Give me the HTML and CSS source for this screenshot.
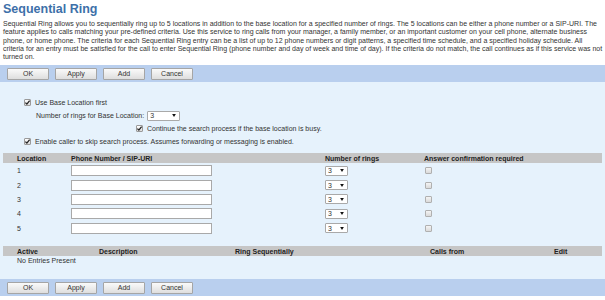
FILE: index.html
```html
<!DOCTYPE html>
<html>
<head>
<meta charset="utf-8">
<link rel="stylesheet" href="styles.css">
</head>
<body>
<h1 class="title">Sequential Ring</h1>
<p class="desc">Sequential Ring allows you to sequentially ring up to 5 locations in addition to the base location for a specified number of rings. The 5 locations can be either a phone number or a SIP-URI. The<br>feature applies to calls matching your pre-defined criteria. Use this service to ring calls from your manager, a family member, or an important customer on your cell phone, alternate business<br>phone, or home phone. The criteria for each Sequential Ring entry can be a list of up to 12 phone numbers or digit patterns, a specified time schedule, and a specified holiday schedule. All<br>criteria for an entry must be satisfied for the call to enter Sequential Ring (phone number and day of week and time of day). If the criteria do not match, the call continues as if this service was not<br>turned on.</p>

<div class="bar">
  <button class="btn">OK</button><button class="btn">Apply</button><button class="btn">Add</button><button class="btn">Cancel</button>
</div>

<div class="panel">
  <div class="opt ind1"><span class="cb"><svg viewBox="0 0 7 7"><path d="M1.4 3.6 L2.9 5.1 L5.6 1.6"/></svg></span><span>Use Base Location first</span></div>
  <div class="opt ind2"><span>Number of rings for Base Location:</span><span class="sel wide">3<svg class="arr" viewBox="0 0 5 4"><path d="M0 0 H5 L2.5 4 Z"/></svg></span></div>
  <div class="opt ind3"><span class="cb"><svg viewBox="0 0 7 7"><path d="M1.4 3.6 L2.9 5.1 L5.6 1.6"/></svg></span><span>Continue the search process if the base location is busy.</span></div>
  <div class="opt ind1"><span class="cb"><svg viewBox="0 0 7 7"><path d="M1.4 3.6 L2.9 5.1 L5.6 1.6"/></svg></span><span>Enable caller to skip search process. Assumes forwarding or messaging is enabled.</span></div>

  <div class="loc-table">
    <div class="thead loc-grid"><span>Location</span><span>Phone Number / SIP-URI</span><span>Number of rings</span><span>Answer confirmation required</span></div>
    <div class="row loc-grid"><span>1</span><input class="txt" type="text"><span class="sel">3<svg class="arr" viewBox="0 0 5 4"><path d="M0 0 H5 L2.5 4 Z"/></svg></span><span class="cb off"></span></div>
    <div class="row loc-grid"><span>2</span><input class="txt" type="text"><span class="sel">3<svg class="arr" viewBox="0 0 5 4"><path d="M0 0 H5 L2.5 4 Z"/></svg></span><span class="cb off"></span></div>
    <div class="row loc-grid"><span>3</span><input class="txt" type="text"><span class="sel">3<svg class="arr" viewBox="0 0 5 4"><path d="M0 0 H5 L2.5 4 Z"/></svg></span><span class="cb off"></span></div>
    <div class="row loc-grid"><span>4</span><input class="txt" type="text"><span class="sel">3<svg class="arr" viewBox="0 0 5 4"><path d="M0 0 H5 L2.5 4 Z"/></svg></span><span class="cb off"></span></div>
    <div class="row loc-grid"><span>5</span><input class="txt" type="text"><span class="sel">3<svg class="arr" viewBox="0 0 5 4"><path d="M0 0 H5 L2.5 4 Z"/></svg></span><span class="cb off"></span></div>
  </div>

  <div class="crit-table">
    <div class="thead crit-grid"><span>Active</span><span>Description</span><span>Ring Sequentially</span><span>Calls from</span><span>Edit</span></div>
    <div class="empty">No Entries Present</div>
  </div>
</div>

<div class="bar bottom">
  <button class="btn">OK</button><button class="btn">Apply</button><button class="btn">Add</button><button class="btn">Cancel</button>
</div>
</body>
</html>
```

FILE: styles.css
```css
* { box-sizing: border-box; }
html, body { margin: 0; padding: 0; background: #fff; }
body {
  font-family: "Liberation Sans", Arial, sans-serif;
  color: #333;
  width: 605px;
  height: 300px;
  overflow: hidden;
}
.title {
  margin: 0;
  padding: 2px 0 0 3px;
  font-size: 12.5px;
  line-height: 15px;
  font-weight: bold;
  color: #3d70a9;
}
.desc {
  margin: 3px 0 0 0;
  padding: 0 0 0 3px;
  font-size: 7px;
  line-height: 8.3px;
  white-space: nowrap;
  color: #333;
}
.bar {
  margin-top: 4px;
  height: 17px;
  background: #b9cfee;
  display: flex;
  align-items: center;
  gap: 6px;
  padding-left: 7px;
}
.bar.bottom { margin-top: 0; }
.btn {
  width: 42px;
  height: 12px;
  padding: 0;
  margin: 0;
  border: 1px solid #a5a5a5;
  border-radius: 1px;
  background: linear-gradient(#fafafa, #dedede);
  font-family: "Liberation Sans", Arial, sans-serif;
  font-size: 7px;
  line-height: 10px;
  color: #333;
}
.panel {
  background: #e6f2fc;
  padding: 14px 0 0 0;
  height: 197px;
}
.opt {
  height: 13px;
  display: flex;
  align-items: center;
  font-size: 7px;
  color: #333;
}
.ind1 { padding-left: 24px; }
.ind1 .cb { margin-right: 4px; }
.ind2 { padding-left: 36px; }
.ind2 .sel { margin-left: 3px; }
.ind3 { padding-left: 136px; }
.ind3 .cb { margin-right: 4px; }
.cb {
  display: inline-block;
  width: 7px;
  height: 7px;
  border: 1px solid #9a9a9a;
  border-radius: 1px;
  background: linear-gradient(#fff, #dcdcdc);
  flex: none;
  position: relative;
}
.cb svg {
  position: absolute;
  left: -1px;
  top: -1px;
  width: 7px;
  height: 7px;
}
.cb svg path {
  fill: none;
  stroke: #222;
  stroke-width: 1.3;
}
.cb.off { border-color: #b0b0b0; background: linear-gradient(#f4f4f4, #dadada); margin-left: 1px; }
.sel {
  display: inline-flex;
  align-items: center;
  justify-content: space-between;
  width: 23px;
  height: 10px;
  border: 1px solid #a9a9a9;
  border-radius: 1px;
  background: #fff;
  padding: 0 3px 0 2px;
  font-size: 7px;
  color: #333;
}
.sel.wide { width: 33px; }
.arr { width: 4px; height: 3px; fill: #111; }
.loc-table { margin-top: 5px; }
.thead {
  margin: 0 3px;
  height: 10px;
  background: #c6c6c6;
  font-size: 7px;
  font-weight: bold;
  color: #222;
  align-items: center;
  padding-left: 14px;
}
.loc-grid {
  display: grid;
  grid-template-columns: 54px 254px 99px 1fr;
  align-items: center;
}
.row {
  margin: 0 3px;
  padding-left: 14px;
  height: 14.4px;
  font-size: 7px;
  color: #333;
}
.txt {
  width: 141px;
  height: 11px;
  margin: 0;
  border: 1px solid #a9a9a9;
  background: #fff;
  padding: 0;
}
.crit-table { margin-top: 11px; }
.crit-grid {
  display: grid;
  grid-template-columns: 82px 136px 195px 124px 1fr;
}
.empty {
  padding-left: 17px;
  height: 10px;
  line-height: 10px;
  font-size: 7px;
  color: #333;
}
```
